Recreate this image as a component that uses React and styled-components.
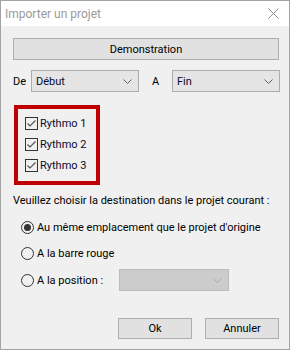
import React from "react";
import styled, { createGlobalStyle } from "styled-components";

const Global = createGlobalStyle`
  html, body { margin: 0; padding: 0; background: #ffffff; }
  body { font-family: Roboto, "Liberation Sans", sans-serif; font-size: 11px; color: #000; }
  * { box-sizing: border-box; }
`;

const Window = styled.div`
  width: 290px;
  height: 350px;
  border: 1px solid #a3a3a3;
  display: flex;
  flex-direction: column;
  background: #f0f0f0;
`;

const TitleBar = styled.div`
  height: 25px;
  background: #ffffff;
  display: flex;
  align-items: center;
  justify-content: space-between;
  padding: 0 10px 0 4px;
`;

const Title = styled.span`
  color: #9a9a9a;
  font-size: 12px;
`;

const Body = styled.div`
  flex: 1;
  display: flex;
  flex-direction: column;
  padding: 12px 10px 0 12px;
  white-space: nowrap;
`;

const Button = styled.button`
  font-family: inherit;
  font-size: 11px;
  color: #000;
  background: #e1e1e1;
  border: 1px solid #adadad;
  height: ${p => p.$h || 22}px;
  width: ${p => (p.$w ? p.$w + "px" : "100%")};
  padding: 0;
  display: flex;
  align-items: center;
  justify-content: center;
`;

const SelectRow = styled.div`
  display: flex;
  align-items: center;
  margin-top: 10px;
  height: 22px;
`;

const Label = styled.span`
  width: ${p => p.$w}px;
  padding-left: ${p => p.$pl || 0}px;
  flex: none;
`;

const Select = styled.div`
  width: ${p => p.$w}px;
  height: ${p => p.$h || 22}px;
  background: ${p => (p.$disabled ? "#cccccc" : "#e5e5e5")};
  border: 1px solid ${p => (p.$disabled ? "#bcbcbc" : "#acacac")};
  display: flex;
  align-items: center;
  justify-content: space-between;
  padding: 0 6px 0 4px;
  color: #0a0a2a;
  flex: none;
`;

const Chevron = ({ color = "#606060" }) => (
  <svg width="9" height="5" viewBox="0 0 9 5">
    <path d="M0.5 0.5 L4.5 4.5 L8.5 0.5" fill="none" stroke={color} strokeWidth="1" />
  </svg>
);

const RedBox = styled.div`
  margin-top: 13px;
  margin-left: 1px;
  width: 86px;
  height: 80px;
  border: 4px solid #c00000;
  padding: 4px 0 0 7px;
  display: flex;
  flex-direction: column;
`;

const CheckRow = styled.div`
  height: 21px;
  display: flex;
  align-items: center;
  gap: 2px;
  color: #0a0a2a;
`;

const Box = styled.span`
  width: 13px;
  height: 13px;
  border: 1px solid #333333;
  display: flex;
  align-items: center;
  justify-content: center;
  flex: none;
`;

const Instruction = styled.div`
  margin-top: 8px;
  height: 16px;
  line-height: 16px;
`;

const RadioRow = styled.div`
  display: flex;
  align-items: center;
  height: ${p => p.$h || 26}px;
  padding-left: 8px;
  gap: 3px;
`;

const Circle = styled.span`
  width: 13px;
  height: 13px;
  border-radius: 50%;
  border: 1px solid #333333;
  display: flex;
  align-items: center;
  justify-content: center;
  flex: none;
  &::after {
    content: "";
    display: ${p => (p.$on ? "block" : "none")};
    width: 7px;
    height: 7px;
    border-radius: 50%;
    background: #333333;
  }
`;

const Radios = styled.div`
  margin-top: 5px;
  display: flex;
  flex-direction: column;
`;

const Footer = styled.div`
  display: flex;
  justify-content: flex-end;
  gap: 13px;
  margin-top: 24px;
`;

const Check = () => (
  <svg width="11" height="11" viewBox="0 0 11 11">
    <path d="M1.5 5.5 L4 8 L9.5 2.5" fill="none" stroke="#555" strokeWidth="1.2" />
  </svg>
);

export default function App() {
  return (
    <>
      <Global />
      <Window>
        <TitleBar>
          <Title>Importer un projet</Title>
          <svg width="11" height="11" viewBox="0 0 11 11">
            <path d="M0.5 0.5 L10.5 10.5 M10.5 0.5 L0.5 10.5" stroke="#8a8a8a" strokeWidth="1" />
          </svg>
        </TitleBar>
        <Body>
          <Button>Demonstration</Button>
          <SelectRow>
            <Label $w={18}>De</Label>
            <Select $w={108}>
              <span>Début</span>
              <Chevron />
            </Select>
            <Label $w={33} $pl={13}>A</Label>
            <Select $w={108}>
              <span>Fin</span>
              <Chevron />
            </Select>
          </SelectRow>
          <RedBox>
            {["Rythmo 1", "Rythmo 2", "Rythmo 3"].map(t => (
              <CheckRow key={t}>
                <Box><Check /></Box>
                <span>{t}</span>
              </CheckRow>
            ))}
          </RedBox>
          <Instruction>Veuillez choisir la destination dans le projet courant :</Instruction>
          <Radios>
            <RadioRow><Circle $on /><span>Au même emplacement que le projet d'origine</span></RadioRow>
            <RadioRow><Circle /><span>A la barre rouge</span></RadioRow>
            <RadioRow $h={28}>
              <Circle />
              <Label $w={79}>A la position :</Label>
              <Select $w={110} $disabled>
                <span />
                <Chevron color="#a8a8a8" />
              </Select>
            </RadioRow>
          </Radios>
          <Footer>
            <Button $w={74} $h={21}>Ok</Button>
            <Button $w={74} $h={21}>Annuler</Button>
          </Footer>
        </Body>
      </Window>
    </>
  );
}
